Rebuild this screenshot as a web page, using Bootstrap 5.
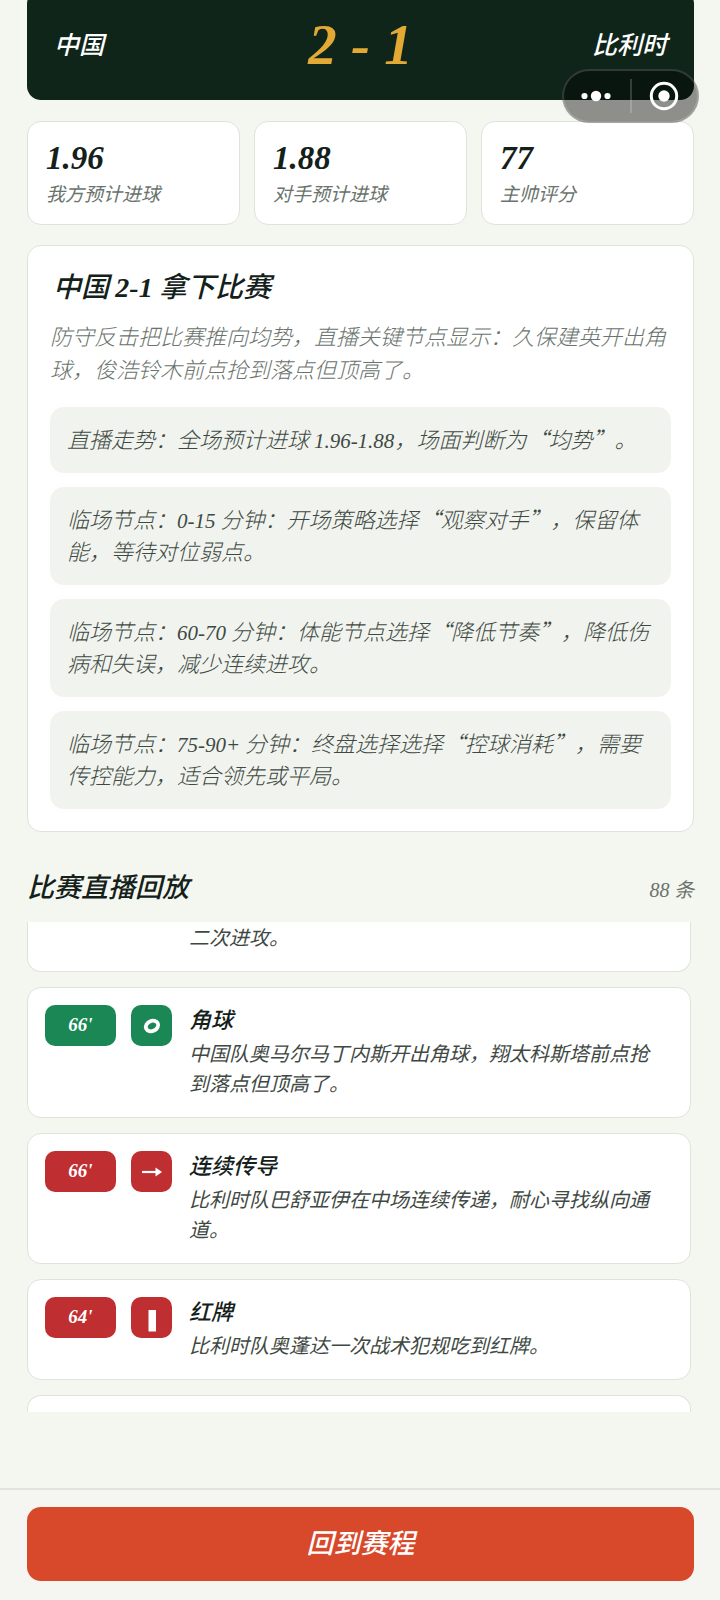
<!DOCTYPE html>
<html lang="zh-CN">
<head>
<meta charset="utf-8">
<meta name="viewport" content="width=device-width, initial-scale=1">
<title>比赛结果</title>
<link href="https://cdn.jsdelivr.net/npm/bootstrap@5.3.0/dist/css/bootstrap.min.css" rel="stylesheet">
<style>
  body { background: #f4f7f0; color: #14211a; font-family: "Noto Sans CJK SC", sans-serif; font-style: italic; overflow-x: hidden; }
  .num { font-family: "Liberation Serif", "Noto Sans CJK SC", serif; }
  .page-body { padding: 0 26px 188px 27px; margin-top: -10px; }
  .scoreboard { background: #10251a; border-radius: 14px; height: 110px; padding: 0 27px; color: #fff; }
  .team-name { font-size: 25px; font-weight: 500; line-height: 36px; flex: 1 1 0; padding-bottom: 4px; }
  .score-line { font-size: 57px; line-height: 64px; font-weight: 700; color: #e2a935; }
  .capsule { position: fixed; top: 69px; right: 21px; width: 137px; height: 54px; border-radius: 27px; background: rgba(0,0,0,.42); border: 2px solid rgba(255,255,255,.16); z-index: 5; }
  .capsule button { flex: 1 1 0; background: none; border: 0; padding: 0; color: #fff; }
  .capsule .divider { width: 2px; height: 34px; background: rgba(255,255,255,.18); }
  .panel { background: #fff; border: 1px solid #dfe3db; border-radius: 14px; }
  .stats { gap: 14px; margin-top: 21px; }
  .stat { flex: 1 1 0; padding: 15px 18px 17px; }
  .stat-value { font-size: 33px; line-height: 42px; font-weight: 700; }
  .stat-label { font-size: 19px; line-height: 28px; color: #6a736d; }
  .summary { margin-top: 20px; padding: 20px 22px 22px; }
  .summary h1 { font-size: 28px; line-height: 38px; font-weight: 500; margin: 0 0 12px; padding-left: 3px; }
  .summary h1 .num { font-weight: 700; }
  .summary-text { font-size: 22px; line-height: 33px; font-weight: 300; color: #6a736d; margin: 0 0 22px; }
  .notes { gap: 14px; }
  .note { background: #f1f4ee; border-radius: 14px; padding: 15px 12px 19px 17px; font-size: 22px; line-height: 32px; font-weight: 300; color: #3f4943; }
  .note .num { font-size: 21px; line-height: 1; }
  .feed-head { margin: 34px 0 16px; }
  .feed-head h2 { font-size: 27px; line-height: 40px; font-weight: 500; margin: 0; }
  .feed-count { font-size: 20px; line-height: 32px; color: #6a736d; }
  .feed { gap: 15px; padding-right: 3px; }
  .event { padding: 17px; }
  .event-first { border-top: 0; border-radius: 0 0 14px 14px; padding: 0 17px 19px; }
  .event-last { border-bottom: 0; border-radius: 14px 14px 0 0; height: 17px; padding: 0; }
  .event-time { width: 71px; height: 41px; border-radius: 10px; font-size: 19px; font-weight: 700; color: #fff; margin-right: 15px; }
  .event-icon { width: 41px; height: 41px; border-radius: 10px; color: #fff; margin-right: 17px; }
  .home-side { background: #1a8754; }
  .away-side { background: #bf2e31; }
  .event h3 { font-size: 22px; line-height: 26px; font-weight: 500; margin: 0 0 7px; }
  .event p { font-size: 20px; line-height: 30px; color: #3f4943; margin: 0; padding: 0 10px 2px 0; }
  .event-first p { padding: 0 0 0 144px; }
  .bottom-bar { background: #f5f5f1; border-top: 2px solid #e2e4dc; padding: 17px 26px 19px 27px; }
  .btn-return { --bs-btn-bg: #d8482b; --bs-btn-color: #fff; --bs-btn-hover-bg: #c43f24; --bs-btn-hover-color: #fff; border: 0; border-radius: 14px; height: 74px; padding-bottom: 10px; font-size: 27px; line-height: 40px; font-weight: 500; font-style: italic; }
</style>
</head>
<body>
<main class="page-body">
  <header class="scoreboard d-flex align-items-center">
    <div class="team-name">中国</div>
    <div class="score-line num">2 - 1</div>
    <div class="team-name text-end">比利时</div>
  </header>

  <section class="stats d-flex">
    <div class="panel stat"><div class="stat-value num">1.96</div><div class="stat-label">我方预计进球</div></div>
    <div class="panel stat"><div class="stat-value num">1.88</div><div class="stat-label">对手预计进球</div></div>
    <div class="panel stat"><div class="stat-value num">77</div><div class="stat-label">主帅评分</div></div>
  </section>

  <section class="panel summary">
    <h1>中国 <span class="num">2-1</span> 拿下比赛</h1>
    <p class="summary-text">防守反击把比赛推向均势，直播关键节点显示：久保建英开出角球，俊浩铃木前点抢到落点但顶高了。</p>
    <div class="notes d-flex flex-column">
      <div class="note">直播走势：全场预计进球 <span class="num">1.96-1.88</span>，场面判断为“均势”。</div>
      <div class="note">临场节点：<span class="num">0-15</span> 分钟：开场策略选择“观察对手”，保留体能，等待对位弱点。</div>
      <div class="note">临场节点：<span class="num">60-70</span> 分钟：体能节点选择“降低节奏”，降低伤病和失误，减少连续进攻。</div>
      <div class="note">临场节点：<span class="num">75-90+</span> 分钟：终盘选择选择“控球消耗”，需要传控能力，适合领先或平局。</div>
    </div>
  </section>

  <div class="feed-head d-flex justify-content-between align-items-end">
    <h2>比赛直播回放</h2>
    <span class="feed-count"><span class="num">88</span> 条</span>
  </div>

  <section class="feed d-flex flex-column">
    <article class="panel event event-first"><p>二次进攻。</p></article>

    <article class="panel event d-flex align-items-start">
      <div class="event-time home-side num d-flex align-items-center justify-content-center flex-shrink-0">66'</div>
      <div class="event-icon home-side d-flex align-items-center justify-content-center flex-shrink-0">
        <svg width="24" height="24" viewBox="0 0 24 24" fill="none" stroke="currentColor" stroke-width="3.800" aria-hidden="true"><ellipse cx="12" cy="12" rx="6.400" ry="5" transform="rotate(-25 12 12)"/></svg>
      </div>
      <div><h3>角球</h3><p>中国队奥马尔马丁内斯开出角球，翔太科斯塔前点抢到落点但顶高了。</p></div>
    </article>

    <article class="panel event d-flex align-items-start">
      <div class="event-time away-side num d-flex align-items-center justify-content-center flex-shrink-0">66'</div>
      <div class="event-icon away-side d-flex align-items-center justify-content-center flex-shrink-0">
        <svg width="24" height="24" viewBox="0 0 24 24" aria-hidden="true"><path d="M2 12h15" stroke="currentColor" stroke-width="2.200"/><path d="M15.500 7.500 22 12l-6.500 4.500z" fill="currentColor"/></svg>
      </div>
      <div><h3>连续传导</h3><p>比利时队巴舒亚伊在中场连续传递，耐心寻找纵向通道。</p></div>
    </article>

    <article class="panel event d-flex align-items-start">
      <div class="event-time away-side num d-flex align-items-center justify-content-center flex-shrink-0">64'</div>
      <div class="event-icon away-side d-flex align-items-center justify-content-center flex-shrink-0">
        <svg width="24" height="28" viewBox="0 0 24 28" aria-hidden="true"><path d="M8.500 6h7.500v21.500H8.500z" fill="currentColor"/></svg>
      </div>
      <div><h3>红牌</h3><p>比利时队奥蓬达一次战术犯规吃到红牌。</p></div>
    </article>

    <div class="panel event-last"></div>
  </section>
</main>

<div class="capsule d-flex align-items-center">
  <button type="button" aria-label="更多" class="d-flex align-items-center justify-content-center">
    <svg width="32" height="12" viewBox="0 0 32 12" fill="currentColor" aria-hidden="true"><circle cx="3.500" cy="6" r="3.100"/><circle cx="15" cy="6" r="5.200"/><circle cx="26.500" cy="6" r="3.100"/></svg>
  </button>
  <span class="divider"></span>
  <button type="button" aria-label="关闭" class="d-flex align-items-center justify-content-center">
    <svg width="30" height="30" viewBox="0 0 30 30" aria-hidden="true"><circle cx="15" cy="15" r="12.700" fill="none" stroke="currentColor" stroke-width="3"/><circle cx="15" cy="15" r="5.700" fill="currentColor"/></svg>
  </button>
</div>

<nav class="bottom-bar fixed-bottom"><button type="button" class="btn btn-return w-100">回到赛程</button></nav>
<script src="https://cdn.jsdelivr.net/npm/bootstrap@5.3.0/dist/js/bootstrap.bundle.min.js"></script>
</body>
</html>
